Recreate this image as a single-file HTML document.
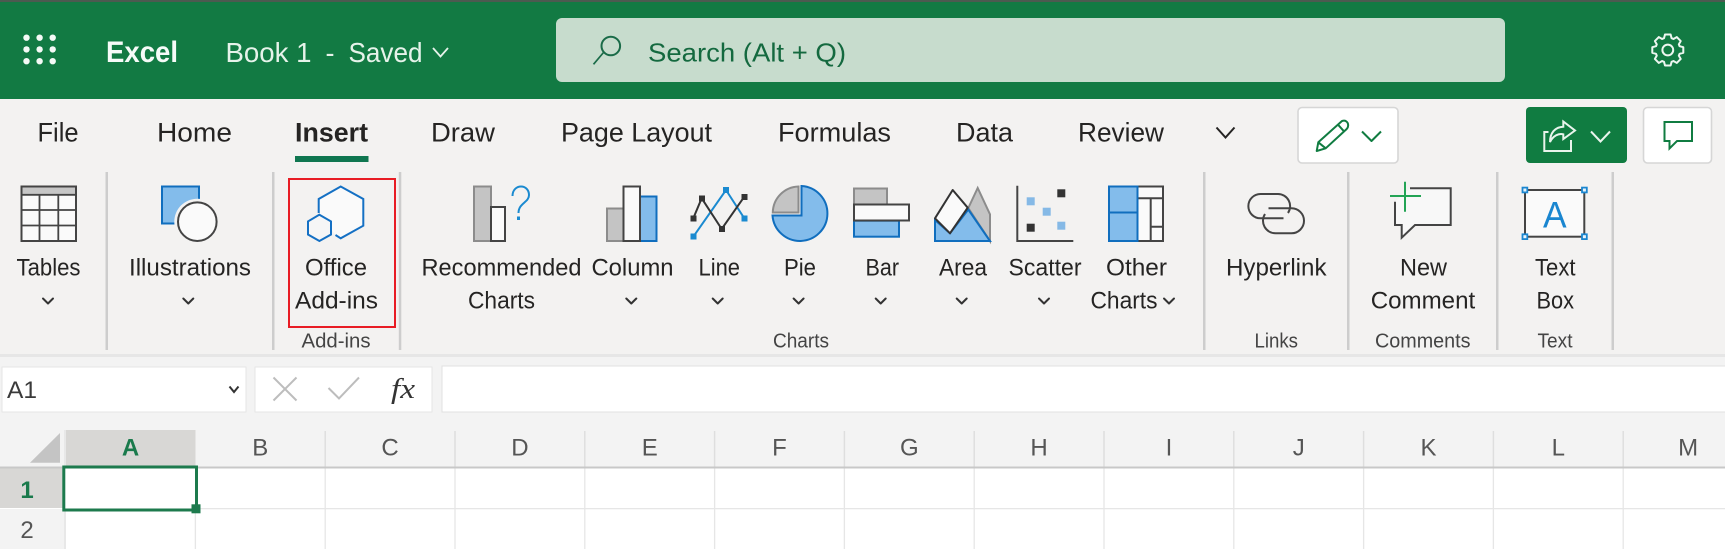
<!DOCTYPE html>
<html lang="en"><head><meta charset="utf-8"><title>Excel</title>
<style>
html,body{margin:0;padding:0;width:1725px;height:549px;overflow:hidden;background:#fff}
svg{display:block;filter:blur(.35px)}
text{font-family:"Liberation Sans",sans-serif;fill:#252423}
.t{font-size:27px}.r{font-size:24px}.g{font-size:20px;fill:#444}.h{font-size:24px;fill:#555;text-anchor:middle}
.c{fill:none;stroke:#333;stroke-width:2;stroke-linecap:round;stroke-linejoin:round}
.d{stroke:#444;stroke-width:2;fill:#fafafa}.gy{stroke:#8c8c8c;stroke-width:2;fill:#c4c4c4}.b{stroke:#106ebe;stroke-width:2;fill:#83bceb}
</style></head><body>
<svg width="1725" height="549" viewBox="0 0 1725 549" xmlns="http://www.w3.org/2000/svg">
<rect width="1725" height="549" fill="#fff"/>
<!-- header -->
<rect width="1725" height="99" fill="#127a43"/><rect width="1725" height="2" fill="#4c5a50"/>
<g fill="#f4faf6"><circle cx="26.5" cy="37.7" r="3.2"/><circle cx="39.6" cy="37.7" r="3.2"/><circle cx="52.7" cy="37.7" r="3.2"/><circle cx="26.5" cy="49.4" r="3.2"/><circle cx="39.6" cy="49.4" r="3.2"/><circle cx="52.7" cy="49.4" r="3.2"/><circle cx="26.5" cy="61.2" r="3.2"/><circle cx="39.6" cy="61.2" r="3.2"/><circle cx="52.7" cy="61.2" r="3.2"/></g>
<text x="106" y="62" font-size="30" font-weight="700" style="fill:#f6fbf8" textLength="72" lengthAdjust="spacingAndGlyphs">Excel</text>
<text x="225.5" y="62" font-size="28" style="fill:#e6f3ea" textLength="86" lengthAdjust="spacingAndGlyphs">Book 1</text>
<text x="325.5" y="62" font-size="27" style="fill:#e6f3ea" textLength="9" lengthAdjust="spacingAndGlyphs">-</text>
<text x="348.5" y="62" font-size="28" style="fill:#e6f3ea" textLength="74" lengthAdjust="spacingAndGlyphs">Saved</text>
<path d="M433 48 L440.5 56.5 L448 48" fill="none" stroke="#e6f3ea" stroke-width="1.8"/>
<rect x="556" y="18" width="949" height="64" rx="6" fill="#c7dccd"/>
<circle cx="610.8" cy="46" r="9.3" fill="none" stroke="#1a6b48" stroke-width="2"/>
<path d="M603.5 52.5 L593.5 64.3" fill="none" stroke="#1a6b48" stroke-width="1.7"/>
<text x="648" y="61.5" font-size="26" style="fill:#14693f" textLength="198" lengthAdjust="spacingAndGlyphs">Search (Alt + Q)</text>
<g transform="translate(1667.8 50)" fill="none" stroke="#eef7f1" stroke-width="2" stroke-linejoin="round">
<path d="M-3.8 -11.8L-2.8 -15.5L2.8 -15.5L3.8 -11.8L5.66 -11.03L8.98 -12.94L12.94 -8.98L11.03 -5.66L11.8 -3.8L15.5 -2.8L15.5 2.8L11.8 3.8L11.03 5.66L12.94 8.98L8.98 12.94L5.66 11.03L3.8 11.8L2.8 15.5L-2.8 15.5L-3.8 11.8L-5.66 11.03L-8.98 12.94L-12.94 8.98L-11.03 5.66L-11.8 3.8L-15.5 2.8L-15.5 -2.8L-11.8 -3.8L-11.03 -5.66L-12.94 -8.98L-8.98 -12.94L-5.66 -11.03Z"/>
<circle r="5.4"/></g>
<!-- ribbon -->
<rect y="99" width="1725" height="256" fill="#f3f2f1"/>
<text class="t" x="37.5" y="141.5" textLength="41" lengthAdjust="spacingAndGlyphs">File</text>
<text class="t" x="157" y="141.5" textLength="75" lengthAdjust="spacingAndGlyphs">Home</text>
<text class="t" x="295" y="141.5" font-weight="700" textLength="73" lengthAdjust="spacingAndGlyphs">Insert</text>
<rect x="295" y="156" width="73.5" height="6" fill="#0f7650"/>
<text class="t" x="431" y="141.5" textLength="64" lengthAdjust="spacingAndGlyphs">Draw</text>
<text class="t" x="561" y="141.5" textLength="151" lengthAdjust="spacingAndGlyphs">Page Layout</text>
<text class="t" x="778" y="141.5" textLength="113" lengthAdjust="spacingAndGlyphs">Formulas</text>
<text class="t" x="956" y="141.5" textLength="57" lengthAdjust="spacingAndGlyphs">Data</text>
<text class="t" x="1078" y="141.5" textLength="86" lengthAdjust="spacingAndGlyphs">Review</text>
<path d="M1216.5 127.5 L1225.5 137.5 L1234.5 127.5" fill="none" stroke="#252423" stroke-width="2"/>
<!-- pencil -->
<rect x="1298" y="107.5" width="100" height="55.5" rx="4" fill="#fff" stroke="#d6d6d6" stroke-width="1.6"/>
<g fill="none" stroke="#107c41" stroke-width="2" stroke-linejoin="round"><path d="M1316.7 151 L1318.3 142.3 L1341.7 121.2 Q1345.5 119.5 1347.7 123 Q1349 126.5 1346.7 129 L1325.7 148.3 Z"/><path d="M1318.3 142.3 L1325.7 148.3 M1337.7 124.3 L1344.3 131.7"/><path d="M1362 131.5 L1371.5 141 L1381 131.5"/></g>
<!-- share -->
<rect x="1526" y="107" width="101" height="56" rx="4" fill="#107c41"/>
<g fill="none" stroke="#e8f4ec" stroke-width="2" stroke-linejoin="miter"><path d="M1548.5 132 H1544.3 V151 H1571 V140"/><path d="M1550 142 C1550 133 1555 127 1563.3 126.7 V121.5 L1575 130.5 L1563.3 139 V134.3 C1558.5 133 1553 136 1550 142 Z"/><path d="M1591 131.5 L1600.5 141.5 L1610 131.5" stroke-width="2"/></g>
<!-- comment -->
<rect x="1643.5" y="107.5" width="68" height="55.5" rx="4" fill="#fff" stroke="#d6d6d6" stroke-width="1.6"/>
<path d="M1664.5 122 H1692 V141 H1677 L1669.5 148.5 V141 H1664.5 Z" fill="none" stroke="#107c41" stroke-width="2"/>
<!-- separators -->
<g fill="#cdcdcd"><rect x="105.5" y="172" width="2.5" height="178"/><rect x="272" y="172" width="2.5" height="178"/><rect x="398.8" y="172" width="2.5" height="178"/><rect x="1203" y="172" width="2.5" height="178"/><rect x="1347" y="172" width="2.5" height="178"/><rect x="1496" y="172" width="2.5" height="178"/><rect x="1611.5" y="172" width="2.5" height="178"/></g>
<!-- tables -->
<rect x="21.5" y="186.5" width="54.5" height="54.5" fill="#fafafa" stroke="#444" stroke-width="2"/>
<rect x="22.5" y="187.5" width="52.5" height="7" fill="#c6c6c6"/>
<path d="M21.5 194.8 H76 M21.5 210 H76 M21.5 225.5 H76 M39.5 194.8 V241 M58.3 194.8 V241" fill="none" stroke="#444" stroke-width="1.8"/>
<text class="r" x="16.5" y="275.7" textLength="64" lengthAdjust="spacingAndGlyphs">Tables</text>
<path class="c" d="M43 298.5 L48 303.5 L53 298.5"/>
<!-- illustrations -->
<rect x="162" y="186.5" width="37" height="37" class="b" stroke-width="2"/>
<circle cx="197.3" cy="221.7" r="23" fill="#f3f2f1"/>
<circle cx="197.3" cy="221.7" r="19.3" fill="#fafafa" stroke="#444" stroke-width="2"/>
<text class="r" x="129" y="275.7" textLength="122" lengthAdjust="spacingAndGlyphs">Illustrations</text>
<path class="c" d="M183.3 298.5 L188.3 303.5 L193.3 298.5"/>
<!-- add-ins -->
<rect x="289" y="179" width="106" height="148" fill="none" stroke="#e81c24" stroke-width="2"/>
<path d="M318.7 213 V199 L340.7 186.5 L363.3 199 V225.7 L340.7 238.3 L335.5 235" fill="#fafafa" stroke="#1470c4" stroke-width="2"/>
<path d="M319.4 214.7 L331 221.4 V234.5 L319.4 241 L308 234.5 V221.4 Z" fill="#f6f6f6" stroke="#1470c4" stroke-width="2"/>
<text class="r" x="305" y="275.7" textLength="62" lengthAdjust="spacingAndGlyphs">Office</text>
<text class="r" x="295" y="308.3" textLength="83" lengthAdjust="spacingAndGlyphs">Add-ins</text>
<text class="g" x="301.5" y="347.7" textLength="69" lengthAdjust="spacingAndGlyphs">Add-ins</text>
<!-- recommended -->
<rect x="474" y="186.5" width="17" height="54.5" class="gy"/>
<rect x="491" y="207" width="14" height="34" class="d"/>
<path d="M512.5 196 C512.5 189.5 517 186.5 521 186.5 C526 186.5 529 190.5 529 195 C529 202.5 518.5 203 518.5 213" fill="none" stroke="#1a8ad0" stroke-width="2"/>
<rect x="517" y="216.5" width="3" height="3.5" fill="#1a8ad0"/>
<text class="r" x="421.5" y="275.7" textLength="160" lengthAdjust="spacingAndGlyphs">Recommended</text>
<text class="r" x="468" y="308.3" textLength="67" lengthAdjust="spacingAndGlyphs">Charts</text>
<!-- column -->
<rect x="607" y="208.5" width="16.5" height="32.5" class="gy"/>
<rect x="640" y="196.5" width="16.5" height="44.5" class="b"/>
<rect x="623.5" y="186.5" width="16.5" height="54.5" class="d"/>
<text class="r" x="591.5" y="275.7" textLength="82" lengthAdjust="spacingAndGlyphs">Column</text>
<path class="c" d="M626.3 298.5 L631.3 303.5 L636.3 298.5"/>
<!-- line -->
<path d="M693.3 236.7 L726 190 L744.3 218.3" fill="none" stroke="#1a8ad0" stroke-width="2"/>
<path d="M693.3 218.3 L701.7 198.3 L721.7 229 L744.3 196.7" fill="none" stroke="#333" stroke-width="2"/>
<g fill="#1a8ad0"><rect x="690.5" y="233.5" width="6" height="6"/><rect x="723" y="187" width="6" height="6"/><rect x="741.5" y="215.5" width="6" height="6"/></g>
<g fill="#333"><rect x="690.5" y="215.5" width="6" height="6"/><rect x="699" y="195.5" width="6" height="6"/><rect x="719" y="226" width="6" height="6"/><rect x="741.5" y="194" width="6" height="6"/></g>
<text class="r" x="698.5" y="275.7" textLength="41.5" lengthAdjust="spacingAndGlyphs">Line</text>
<path class="c" d="M712.7 298.5 L717.7 303.5 L722.7 298.5"/>
<!-- pie -->
<path d="M772.5 215.5 A27.5 27.5 0 1 0 801.5 186 V215.5 Z" class="b"/>
<path d="M798.5 186.5 A26.5 26.5 0 0 0 772.8 212.5 H798.5 Z" class="gy"/>
<text class="r" x="784" y="275.7" textLength="32" lengthAdjust="spacingAndGlyphs">Pie</text>
<path class="c" d="M793.6 298.5 L798.6 303.5 L803.6 298.5"/>
<!-- bar -->
<rect x="854" y="188.5" width="33" height="16" class="gy"/>
<rect x="854" y="220.7" width="45" height="16" class="b"/>
<rect x="854" y="204.5" width="55" height="16" class="d"/>
<text class="r" x="865.5" y="275.7" textLength="33.5" lengthAdjust="spacingAndGlyphs">Bar</text>
<path class="c" d="M875.7 298.5 L880.7 303.5 L885.7 298.5"/>
<!-- area -->
<path d="M968.3 208 L977.7 188 L990 214.3 V241 Z" class="gy"/>
<path d="M935 220 L950 233.3 L968.3 209.5 L990 241 H935 Z" class="b"/>
<path d="M935 218.3 L952.7 190 L967.7 207.7 L950 233.3 Z" fill="#fafafa" stroke="#333" stroke-width="2" stroke-linejoin="round"/>
<text class="r" x="939" y="275.7" textLength="48" lengthAdjust="spacingAndGlyphs">Area</text>
<path class="c" d="M956.7 298.5 L961.7 303.5 L966.7 298.5"/>
<!-- scatter -->
<path d="M1017.3 185.7 V241 H1073.3" fill="none" stroke="#444" stroke-width="2"/>
<g fill="#333"><rect x="1057.3" y="189.3" width="8" height="8"/><rect x="1026.7" y="223.7" width="8" height="8"/></g>
<g fill="#85b9e6"><rect x="1026.7" y="197.3" width="8" height="8"/><rect x="1042.7" y="207.7" width="8" height="8"/><rect x="1057.3" y="221.7" width="8" height="8"/></g>
<text class="r" x="1008.5" y="275.7" textLength="73" lengthAdjust="spacingAndGlyphs">Scatter</text>
<path class="c" d="M1039 298.5 L1044 303.5 L1049 298.5"/>
<!-- other charts -->
<rect x="1137.5" y="186.5" width="25.5" height="54.5" fill="#fafafa" stroke="#444" stroke-width="2"/>
<path d="M1137.5 198.3 H1163 M1150.7 198.3 V241 M1150.7 226.7 H1163" fill="none" stroke="#444" stroke-width="2"/>
<rect x="1109" y="186.5" width="28.5" height="54.5" class="b"/>
<path d="M1109 212.5 H1137.5" stroke="#106ebe" stroke-width="2"/>
<text class="r" x="1106" y="275.7" textLength="61" lengthAdjust="spacingAndGlyphs">Other</text>
<text class="r" x="1090.5" y="308.3" textLength="67" lengthAdjust="spacingAndGlyphs">Charts</text>
<path class="c" d="M1164 298.5 L1169 303.5 L1174 298.5"/>
<text class="g" x="773" y="347.7" textLength="56" lengthAdjust="spacingAndGlyphs">Charts</text>
<!-- hyperlink -->
<path d="M1283.5 218.3 H1260.5 A12.15 12.15 0 0 1 1260.5 194 H1278 A12.15 12.15 0 0 1 1288 213" fill="none" stroke="#444" stroke-width="2"/>
<path d="M1268.5 208.3 H1291.5 A12.5 12.5 0 0 1 1291.5 233.3 H1275.5 A12.5 12.5 0 0 1 1265 214" fill="none" stroke="#444" stroke-width="2"/>
<text class="r" x="1226" y="275.7" textLength="100.5" lengthAdjust="spacingAndGlyphs">Hyperlink</text>
<text class="g" x="1254.5" y="347.7" textLength="43.5" lengthAdjust="spacingAndGlyphs">Links</text>
<!-- comment -->
<path d="M1410 188.3 H1450.7 V225 H1415 L1401.7 237.7 V225 H1395 V201.7" fill="#f8f8f8" stroke="#444" stroke-width="2"/>
<path d="M1390 196 H1421 M1405 181.7 V211.7" fill="none" stroke="#23a455" stroke-width="2"/>
<text class="r" x="1400" y="275.7" textLength="47" lengthAdjust="spacingAndGlyphs">New</text>
<text class="r" x="1370.7" y="308.3" textLength="104.5" lengthAdjust="spacingAndGlyphs">Comment</text>
<text class="g" x="1375" y="347.7" textLength="95.5" lengthAdjust="spacingAndGlyphs">Comments</text>
<!-- textbox -->
<rect x="1525" y="190" width="59.3" height="46.7" fill="#fafafa" stroke="#444" stroke-width="2"/>
<g fill="#eaf4fb" stroke="#1a86d0" stroke-width="1.8"><rect x="1522.5" y="187.6" width="4.8" height="4.8"/><rect x="1582" y="187.6" width="4.8" height="4.8"/><rect x="1522.5" y="234.3" width="4.8" height="4.8"/><rect x="1582" y="234.3" width="4.8" height="4.8"/></g>
<text x="1543" y="227.5" font-size="37" style="fill:#1a86d0" textLength="23.6" lengthAdjust="spacingAndGlyphs">A</text>
<text class="r" x="1535" y="275.7" textLength="40.5" lengthAdjust="spacingAndGlyphs">Text</text>
<text class="r" x="1536.5" y="308.3" textLength="37.5" lengthAdjust="spacingAndGlyphs">Box</text>
<text class="g" x="1537.5" y="347.7" textLength="35" lengthAdjust="spacingAndGlyphs">Text</text>
<!-- formula bar -->
<rect y="354" width="1725" height="114" fill="#f3f3f3"/>
<rect y="354" width="1725" height="3" fill="#e6e6e6"/>
<rect x="2" y="367" width="244" height="45" fill="#fff" stroke="#e6e6e6"/>
<rect x="255" y="367" width="177" height="45" fill="#fff" stroke="#e6e6e6"/>
<rect x="442" y="366" width="1290" height="46" fill="#fff" stroke="#e0e0e0"/>
<text x="7" y="398" font-size="24" style="fill:#3a3a3a" textLength="30" lengthAdjust="spacingAndGlyphs">A1</text>
<path d="M229.5 386.5 L234 392 L238.5 386.5" fill="none" stroke="#333" stroke-width="2"/>
<path d="M273.5 377.5 L296.5 400.5 M296.5 377.5 L273.5 400.5" fill="none" stroke="#bdbdbd" stroke-width="2"/>
<path d="M328.5 388 L339 398.5 L359 377.5" fill="none" stroke="#bdbdbd" stroke-width="2"/>
<text x="391" y="398" font-size="29" font-style="italic" style="font-family:'Liberation Serif',serif;fill:#333" textLength="24" lengthAdjust="spacingAndGlyphs">fx</text>
<!-- headers -->
<rect x="66" y="430" width="129.5" height="37" fill="#d8d7d5"/>
<path d="M60 433 V462.7 H30 Z" fill="#c4c4c4"/>
<g stroke="#dedede" stroke-width="1.5"><path d="M325.2 431V467M455 431V467M584.8 431V467M714.6 431V467M844.4 431V467M974.2 431V467M1104 431V467M1233.8 431V467M1363.6 431V467M1493.4 431V467M1623.2 431V467"/></g>
<rect y="468" width="65" height="40" fill="#d8d7d5"/>
<rect y="509" width="65" height="40" fill="#f3f3f3"/>
<!-- grid -->
<g stroke="#e6e6e6" stroke-width="1.3"><path d="M65 508.6H1725M195.4 468V549M325.2 468V549M455 468V549M584.8 468V549M714.6 468V549M844.4 468V549M974.2 468V549M1104 468V549M1233.8 468V549M1363.6 468V549M1493.4 468V549M1623.2 468V549"/></g>
<rect y="466.5" width="1725" height="2" fill="#c8c8c8"/>
<rect x="64" y="430" width="2" height="119" fill="#e8e8e8"/>
<text class="h" x="130.5" y="455.7" font-weight="700" font-size="25" style="fill:#1a7a4c">A</text>
<text class="h" x="260.3" y="455.7">B</text><text class="h" x="390.1" y="455.7">C</text><text class="h" x="519.9" y="455.7">D</text><text class="h" x="649.7" y="455.7">E</text><text class="h" x="779.5" y="455.7">F</text><text class="h" x="909.3" y="455.7">G</text><text class="h" x="1039.1" y="455.7">H</text><text class="h" x="1168.9" y="455.7">I</text><text class="h" x="1298.7" y="455.7">J</text><text class="h" x="1428.5" y="455.7">K</text><text class="h" x="1558.3" y="455.7">L</text><text class="h" x="1688.1" y="455.7">M</text>
<text class="h" x="27" y="498" font-weight="700" font-size="26" style="fill:#1a7a4c">1</text>
<text class="h" x="27" y="538" font-size="26">2</text>
<!-- selection -->
<rect x="63.8" y="467" width="132.7" height="43" fill="#fff" stroke="#1d7a4d" stroke-width="3"/>
<rect x="191.5" y="504.3" width="9" height="9" fill="#1d7a4d"/>
</svg>
</body></html>
